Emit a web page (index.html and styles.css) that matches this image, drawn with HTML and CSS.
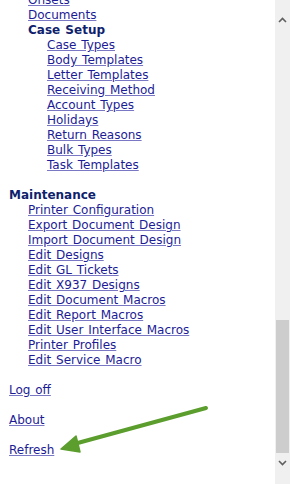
FILE: index.html
```html
<!DOCTYPE html>
<html lang="en">
<head>
    <meta charset="UTF-8">
    <title>Menu</title>
    <link rel="stylesheet" href="styles.css">
</head>
<body>
    <div class="frame">
        <div class="menu">
            <div class="group sub">
                <a class="item" href="#">Onsets</a>
                <a class="item" href="#">Documents</a>
                <div class="heading">Case Setup</div>
                <div class="group sub">
                    <a class="item" href="#">Case Types</a>
                    <a class="item" href="#">Body Templates</a>
                    <a class="item" href="#">Letter Templates</a>
                    <a class="item" href="#">Receiving Method</a>
                    <a class="item" href="#">Account Types</a>
                    <a class="item" href="#">Holidays</a>
                    <a class="item" href="#">Return Reasons</a>
                    <a class="item" href="#">Bulk Types</a>
                    <a class="item" href="#">Task Templates</a>
                </div>
            </div>

            <div class="section">
                <div class="heading">Maintenance</div>
                <div class="group sub">
                    <a class="item" href="#">Printer Configuration</a>
                    <a class="item" href="#">Export Document Design</a>
                    <a class="item" href="#">Import Document Design</a>
                    <a class="item" href="#">Edit Designs</a>
                    <a class="item" href="#">Edit GL Tickets</a>
                    <a class="item" href="#">Edit X937 Designs</a>
                    <a class="item" href="#">Edit Document Macros</a>
                    <a class="item" href="#">Edit Report Macros</a>
                    <a class="item" href="#">Edit User Interface Macros</a>
                    <a class="item" href="#">Printer Profiles</a>
                    <a class="item" href="#">Edit Service Macro</a>
                </div>
            </div>

            <div class="section"><a class="item" href="#">Log off</a></div>
            <div class="section"><a class="item" href="#">About</a></div>
            <div class="section"><a class="item" href="#">Refresh</a></div>

            <!-- annotation arrow over the menu -->
            <svg class="arrow" width="275" height="484" viewBox="0 0 275 484">
                <line x1="206" y1="408" x2="74" y2="444" stroke="#5c9e2e" stroke-width="4" stroke-linecap="round"/>
                <polygon points="61,449 76,436 80,452" fill="#5c9e2e" stroke="#5c9e2e" stroke-width="1.5" stroke-linejoin="round"/>
            </svg>
        </div>
        <div class="scrollbar">
            <div class="sb-btn sb-up">
                <svg width="9" height="6" viewBox="0 0 9 6"><path d="M1 5 L4.5 1.5 L8 5" fill="none" stroke="#606060" stroke-width="1.6"/></svg>
            </div>
            <div class="sb-track"><div class="sb-thumb"></div></div>
            <div class="sb-btn sb-down">
                <svg width="9" height="6" viewBox="0 0 9 6"><path d="M1 1 L4.5 4.5 L8 1" fill="none" stroke="#606060" stroke-width="1.6"/></svg>
            </div>
        </div>
    </div>
</body>
</html>
```

FILE: styles.css
```css
html, body {
    margin: 0;
    height: 100%;
    background: #fff;
}
body {
    font-family: "DejaVu Sans", Verdana, sans-serif;
    font-size: 12px;
    word-spacing: 1px;
    overflow: hidden;
}
.frame {
    display: flex;
    height: 484px;
}
.menu {
    flex: 1;
    position: relative;
    overflow: hidden;
    padding: 0 0 0 9px;
}
.menu > .group:first-child {
    margin-top: -7px;
}
.group {
    display: flex;
    flex-direction: column;
    align-items: flex-start;
}
.sub {
    padding-left: 19px;
}
.section {
    margin-top: 15px;
    display: flex;
    flex-direction: column;
    align-items: flex-start;
}
.item {
    display: block;
    line-height: 15px;
    height: 15px;
    color: #1c1c96;
    text-decoration: underline;
    text-decoration-color: #7a78c4;
    white-space: nowrap;
}
.heading {
    line-height: 15px;
    height: 15px;
    font-weight: bold;
    color: #0f1f6e;
    white-space: nowrap;
}
.arrow {
    position: absolute;
    left: 0;
    top: 0;
    pointer-events: none;
}
.scrollbar {
    width: 15px;
    background: #f0f0f0;
    display: flex;
    flex-direction: column;
}
.sb-btn {
    display: flex;
    justify-content: center;
}
.sb-up {
    height: 40px;
    align-items: center;
}
.sb-down {
    height: 31px;
    padding-top: 7px;
    box-sizing: border-box;
    align-items: flex-start;
}
.sb-track {
    flex: 1;
    display: flex;
    flex-direction: column;
    justify-content: flex-end;
    padding: 0 1px;
}
.sb-thumb {
    height: 133px;
    background: #cdcdcd;
}
```
